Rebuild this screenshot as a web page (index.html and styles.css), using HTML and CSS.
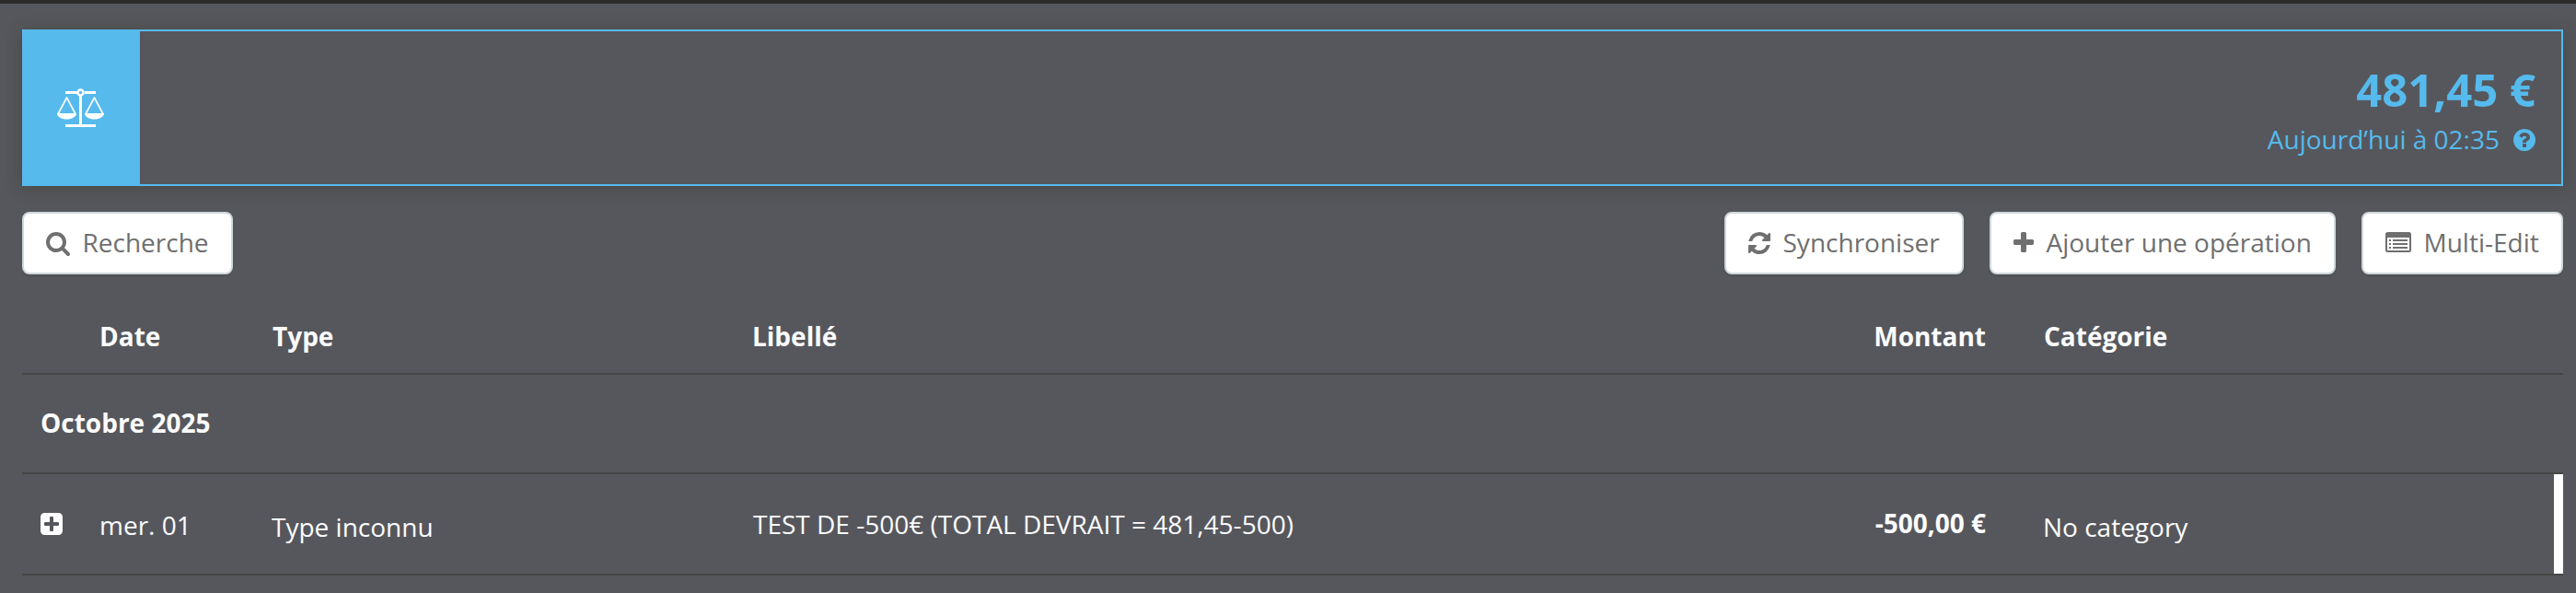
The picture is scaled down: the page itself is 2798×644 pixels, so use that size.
FILE: index.html
```html
<!DOCTYPE html>
<html lang="fr">
<head>
<meta charset="utf-8">
<title>Opérations</title>
<link rel="stylesheet" href="styles.css">
</head>
<body>
<main class="page">
  <section class="balance">
    <div class="balance-icon">
      <svg width="52" height="44" viewBox="0 0 52 44" fill="none" stroke="#fff">
        <path d="M9 4.500h13M30 4.500h12M25.500 8v32M9 40.500h33" stroke-width="3"/>
        <circle cx="25.500" cy="4.500" r="3" stroke-width="2.500"/>
        <path d="M1.200 27.500L10.500 10l9.300 17.500M31.200 27.500L40.500 10l9.300 17.500" stroke-width="1.600" stroke-linejoin="round"/>
        <path d="M0 27h21c0 4-5 6.500-10.500 6.500S0 31 0 27zM30 27h21c0 4-5 6.500-10.500 6.500S30 31 30 27z" fill="#fff" stroke="none"/>
      </svg>
    </div>
    <div class="balance-body">
      <div class="amount">481,45 €</div>
      <div class="updated"><span class="updated-text">Aujourd’hui à 02:35</span>
        <svg width="24" height="24" viewBox="0 0 1536 1536" fill="currentColor"><path d="M896 1248v-192q0-14-9-23t-23-9H672q-14 0-23 9t-9 23v192q0 14 9 23t23 9h192q14 0 23-9t9-23zm256-672q0-88-55.500-163T958 297t-170-41q-243 0-371 213-15 24 8 42l132 100q7 6 19 6 16 0 25-12 53-68 86-92 34-24 86-24 48 0 85.500 26t37.500 59q0 38-20 61t-68 45q-63 28-115.500 86.500T640 892v36q0 14 9 23t23 9h192q14 0 23-9t9-23q0-19 21.500-49.500T972 829q32-18 49-28.500t46-35 44.500-48 28-60.500 12.500-81zm384 192q0 209-103 385.500T1153.500 1433 768 1536t-385.500-103T103 1153.500 0 768t103-385.500T382.500 103 768 0t385.500 103T1433 382.500 1536 768z"/></svg>
      </div>
    </div>
  </section>

  <nav class="toolbar">
    <button class="btn btn-search"><svg width="26" height="26" viewBox="0 0 1664 1664" fill="currentColor"><path d="M1152 704q0-185-131.500-316.500T704 256 387.500 387.500 256 704t131.500 316.500T704 1152t316.500-131.500T1152 704zm512 832q0 52-38 90t-90 38q-54 0-90-38l-343-342q-179 124-399 124-143 0-273.500-55.500t-225-150-150-225T0 704t55.500-273.500 150-225 225-150T704 0t273.500 55.500 225 150 150 225T1408 704q0 220-124 399l343 343q37 37 37 90z"/></svg><span>Recherche</span></button>
    <div class="actions">
      <button class="btn btn-sync"><svg width="24" height="24" viewBox="0 0 1536 1536" fill="currentColor"><path d="M1511 928q0 5-1 7-64 268-268 434.500T764 1536q-146 0-282.500-55T238 1324l-129 129q-19 19-45 19t-45-19-19-45V960q0-26 19-45t45-19h448q26 0 45 19t19 45-19 45l-137 137q71 66 161 102t187 36q134 0 250-65t186-179q11-17 53-117 8-23 30-23h192q13 0 22.500 9.500t9.500 22.500zm25-800v448q0 26-19 45t-45 19h-448q-26 0-45-19t-19-45 19-45l138-138Q969 256 768 256q-134 0-250 65T332 500q-11 17-53 117-8 23-30 23H50q-13 0-22.500-9.500T18 608v-7q65-268 270-434.500T768 0q146 0 284 55.500T1297 212l130-129q19-19 45-19t45 19 19 45z"/></svg><span>Synchroniser</span></button>
      <button class="btn btn-add"><svg width="22" height="22" viewBox="0 0 1408 1408" fill="currentColor"><path d="M1408 608v192q0 40-28 68t-68 28H896v416q0 40-28 68t-68 28H608q-40 0-68-28t-28-68V896H96q-40 0-68-28t-28-68V608q0-40 28-68t68-28h416V96q0-40 28-68t68-28h192q40 0 68 28t28 68v416h416q40 0 68 28t28 68z"/></svg><span>Ajouter une opération</span></button>
      <button class="btn btn-multi"><svg width="28" height="22" viewBox="0 0 28 22" fill="currentColor"><path fill-rule="evenodd" d="M2.500 0h23A2.500 2.500 0 0 1 28 2.500v17a2.500 2.500 0 0 1-2.500 2.500h-23A2.500 2.500 0 0 1 0 19.500v-17A2.500 2.500 0 0 1 2.500 0zM2 6v13.500q0 .5.500.5h23q.5 0 .5-.5V6z"/><path d="M4 8h2v1.900H4zM4 12h2v1.900H4zM4 16h2v1.900H4zM8 8h16v1.900H8zM8 12h16v1.900H8zM8 16h16v1.900H8z"/></svg><span>Multi-Edit</span></button>
    </div>
  </nav>

  <div class="table">
    <div class="row head">
      <div></div><div>Date</div><div>Type</div><div>Libellé</div><div class="right">Montant</div><div class="category">Catégorie</div>
    </div>
    <div class="row month"><div class="month-name">Octobre 2025</div></div>
    <div class="row operation">
      <div class="expand"><svg width="24" height="24" viewBox="0 0 24 24"><path fill="#fff" fill-rule="evenodd" d="M4.500 0h15A4.500 4.500 0 0 1 24 4.500v15a4.500 4.500 0 0 1-4.500 4.500h-15A4.500 4.500 0 0 1 0 19.500v-15A4.500 4.500 0 0 1 4.500 0zM11 4a1 1 0 0 0-1 1v5H5a1 1 0 0 0-1 1v2a1 1 0 0 0 1 1h5v5a1 1 0 0 0 1 1h2a1 1 0 0 0 1-1v-5h5a1 1 0 0 0 1-1v-2a1 1 0 0 0-1-1h-5V5a1 1 0 0 0-1-1z"/></svg></div>
      <div class="date">mer. 01</div>
      <div class="type">Type inconnu</div>
      <div class="label">TEST DE -500€ (TOTAL DEVRAIT = 481,45-500)</div>
      <div class="right value">-500,00 €</div>
      <div class="category cat-value">No category</div>
    </div>
  </div>
</main>
</body>
</html>
```
FILE: styles.css
```css
* { box-sizing: border-box; }
body {
  margin: 0;
  background: #56575c;
  color: #fcfcff;
  font: 28px/40px "Open Sans", "Noto Sans", sans-serif;
}
svg { display: block; flex: none; }
.page {
  height: 644px;
  border-top: 4px solid #2c2c2c;
  padding: 28px 14px 0 24px;
  overflow: hidden;
}
.balance {
  display: flex;
  height: 170px;
  border: 2px solid #56baed;
  color: #56baed;
  box-shadow: 0 2px 16px rgba(50, 50, 30, .4);
}
.balance-icon {
  width: 126px;
  background: #56baed;
  padding: 62px 0 0 36px;
}
.balance-body {
  flex: 1;
  display: flex;
  flex-direction: column;
  align-items: flex-end;
  padding: 28px 28px 0 0;
}
.amount { font-size: 49px; font-weight: 700; line-height: 70px; }
.updated { display: flex; align-items: flex-start; gap: 15px; margin-top: 1px; line-height: 36px; }
.updated svg { margin-top: 7px; }
.toolbar {
  display: flex;
  justify-content: space-between;
  margin-top: 28px;
}
.actions { display: flex; gap: 28px; }
.btn {
  display: flex;
  align-items: flex-start;
  height: 68px;
  border: 2px solid #cfd8da;
  border-radius: 8px;
  padding: 20px 0 0 24px;
  background: #fff;
  color: #6f6f6f;
  font: inherit;
  line-height: 28px;
  white-space: nowrap;
  box-shadow: 0 2px 2px rgba(0, 0, 0, .08);
}
.btn span { margin-top: -3px; }
.btn-search { width: 229px; gap: 13.5px; }
.btn-sync { width: 260px; gap: 13.5px; }
.btn-add { width: 376px; gap: 13.5px; }
.btn-multi { width: 219px; gap: 13.5px; }
.table { margin-top: 28px; }
.row {
  display: grid;
  grid-template-columns: 84px 188px 521px 1039px 301px 1fr;
  border-bottom: 2px solid #464646;
  white-space: nowrap;
}
.head { height: 81px; padding-top: 19px; font-weight: 700; }
.right { text-align: right; }
.category { padding-left: 63px; }
.month { height: 108px; padding-top: 32px; font-weight: 700; }
.month-name { padding-left: 20px; grid-column: 1 / -1; }
.operation { height: 110px; position: relative; padding-top: 34px; }
.operation::after {
  content: "";
  position: absolute;
  right: 0;
  top: 0;
  bottom: 0;
  width: 10px;
  background: #fff;
}
.expand { padding: 8px 0 0 20px; }
.date { padding-top: 1px; }
.type { padding-top: 3px; margin-left: -1px; }
.label { margin-left: 1px; }
.cat-value { padding: 3px 0 0 62px; }
.value { font-weight: 700; margin-top: -1px; }
```
